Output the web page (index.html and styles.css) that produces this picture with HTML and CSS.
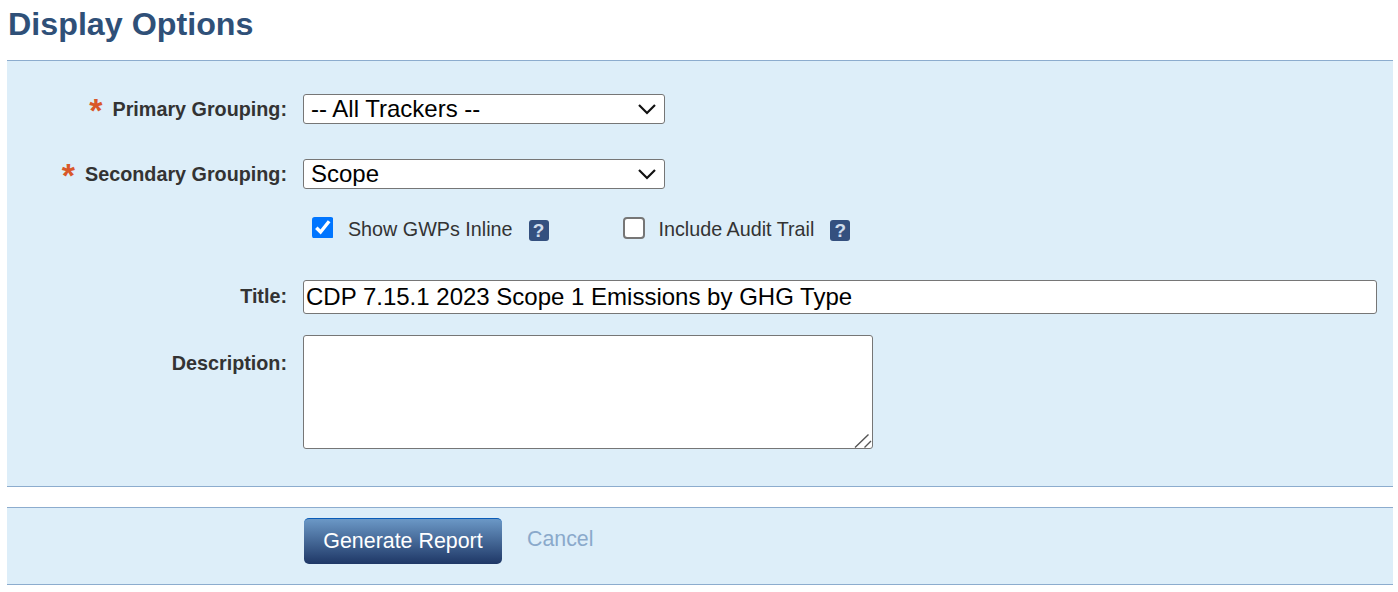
FILE: index.html
```html
<!DOCTYPE html>
<html lang="en">
<head>
<meta charset="utf-8">
<title>Display Options</title>
<link rel="stylesheet" href="styles.css">
</head>
<body>
<h1 class="title">Display Options</h1>
<form class="panel main-panel">
  <div class="row">
    <label class="label"><span class="req">*</span>Primary Grouping:</label>
    <div class="select-wrap">
      <select class="select"><option>-- All Trackers --</option></select>
      <svg class="chevron" width="20" height="12" viewBox="0 0 20 12"><path d="M2 2l8 8 8-8" fill="none" stroke="#111" stroke-width="2.2"/></svg>
    </div>
  </div>
  <div class="row row-second">
    <label class="label"><span class="req">*</span>Secondary Grouping:</label>
    <div class="select-wrap">
      <select class="select"><option>Scope</option></select>
      <svg class="chevron" width="20" height="12" viewBox="0 0 20 12"><path d="M2 2l8 8 8-8" fill="none" stroke="#111" stroke-width="2.2"/></svg>
    </div>
  </div>
  <div class="row row-checks">
    <div class="label"></div>
    <div class="checks">
      <label class="check"><input type="checkbox" class="box" checked><span class="check-text">Show GWPs Inline</span></label>
      <span class="help">?</span>
      <label class="check check-second"><input type="checkbox" class="box"><span class="check-text">Include Audit Trail</span></label>
      <span class="help">?</span>
    </div>
  </div>
  <div class="row row-title">
    <label class="label">Title:</label>
    <input class="text" type="text" value="CDP 7.15.1 2023 Scope 1 Emissions by GHG Type">
  </div>
  <div class="row row-desc">
    <label class="label label-top">Description:</label>
    <div class="area-wrap">
      <textarea class="area"></textarea>
      <svg class="grip" width="18" height="14" viewBox="0 0 18 14"><path d="M1 13.5L14.5 0.5M10.5 13.5L17 7" fill="none" stroke="#555" stroke-width="1.4"/></svg>
    </div>
  </div>
</form>
<div class="panel actions">
  <div class="label"></div>
  <button class="btn" type="button">Generate Report</button>
  <a class="cancel">Cancel</a>
</div>
</body>
</html>
```
FILE: styles.css
```css
html, body {
  margin: 0;
  padding: 0;
  background: #fff;
}
body {
  font-family: "Liberation Sans", Arial, sans-serif;
  color: #333;
  height: 592px;
  overflow: hidden;
}
.title {
  margin: 0;
  padding: 6px 0 0 8px;
  height: 52px;
  box-sizing: border-box;
  font-size: 32.25px;
  line-height: 37px;
  font-weight: bold;
  color: #2f5078;
}
.panel {
  margin: 0 5px 0 7px;
  background: #ddeef9;
  border-top: 1px solid #8cacce;
  border-bottom: 1px solid #8cacce;
}
.main-panel {
  display: block;
  height: 427px;
  margin-top: 8px;
  padding-top: 33px;
  box-sizing: border-box;
}
.row {
  display: flex;
  align-items: center;
}
.label {
  width: 280px;
  flex: none;
  margin-right: 16px;
  padding-bottom: 2px;
  text-align: right;
  font-size: 19.75px;
  font-weight: bold;
  color: #333;
  white-space: nowrap;
}
.req {
  color: #d9582a;
  font-size: 34px;
  line-height: 18px;
  margin-right: 10px;
  font-weight: bold;
  position: relative;
  top: 6px;
}
.select-wrap {
  position: relative;
  display: flex;
}
.select {
  appearance: none;
  width: 362px;
  height: 30px;
  box-sizing: border-box;
  font-family: "Liberation Sans", Arial, sans-serif;
  font-size: 24px;
  color: #000;
  background: #fff;
  border: 1px solid #767676;
  border-radius: 3px;
  padding: 0 7px 2px;
}
.chevron {
  position: absolute;
  right: 8px;
  top: 9px;
  pointer-events: none;
}
.row-second {
  margin-top: 35px;
}
.row-checks {
  margin-top: 28px;
}
.checks {
  display: flex;
  align-items: flex-start;
  padding-left: 9px;
}
.check {
  display: flex;
  align-items: flex-start;
}
.check-text {
  font-size: 19.75px;
  line-height: 24px;
  color: #333;
}
.box {
  zoom: 1.34;
  width: 16.4px;
  height: 16.4px;
  margin: 0 10.4px 0 0;
}
.box:not(:checked) {
  appearance: none;
  box-sizing: border-box;
  background: #fff;
  border: 1.5px solid #767676;
  border-radius: 3px;
}
.check-second {
  margin-left: 74px;
}
.help {
  display: block;
  width: 20px;
  height: 21px;
  margin: 3px 0 0 16px;
  border-radius: 3px;
  background: #34507f;
  color: #cfdcec;
  font-size: 19px;
  font-weight: bold;
  line-height: 21px;
  text-align: center;
}
.row-title {
  margin-top: 39px;
}
.text {
  width: 1074px;
  height: 34px;
  box-sizing: border-box;
  font-family: "Liberation Sans", Arial, sans-serif;
  font-size: 24px;
  color: #000;
  background: #fff;
  border: 1px solid #767676;
  border-radius: 3px;
  padding: 0 2px;
}
.row-desc {
  margin-top: 21px;
  align-items: flex-start;
}
.label-top {
  padding-top: 17px;
}
.area-wrap {
  position: relative;
  display: flex;
}
.area {
  display: block;
  width: 570px;
  height: 114px;
  box-sizing: border-box;
  margin: 0;
  background: #fff;
  border: 1px solid #767676;
  border-radius: 3px;
  font-size: 24px;
  resize: none;
}
.grip {
  position: absolute;
  right: 1px;
  bottom: 1px;
  pointer-events: none;
}
.actions {
  display: flex;
  align-items: flex-start;
  height: 78px;
  box-sizing: border-box;
  margin-top: 20px;
}
.actions .label {
  margin-right: 17px;
}
.btn {
  width: 198px;
  height: 46px;
  margin-top: 10px;
  border: 0;
  border-top: 1px solid #0a5cb8;
  border-radius: 5px;
  background: linear-gradient(#6b98c6, #1e3766);
  color: #fff;
  font-family: "Liberation Sans", Arial, sans-serif;
  font-size: 21.4px;
  padding: 0;
}
.cancel {
  margin: 19px 0 0 25px;
  font-size: 21.33px;
  line-height: 25px;
  color: #8aa9cb;
}
```
